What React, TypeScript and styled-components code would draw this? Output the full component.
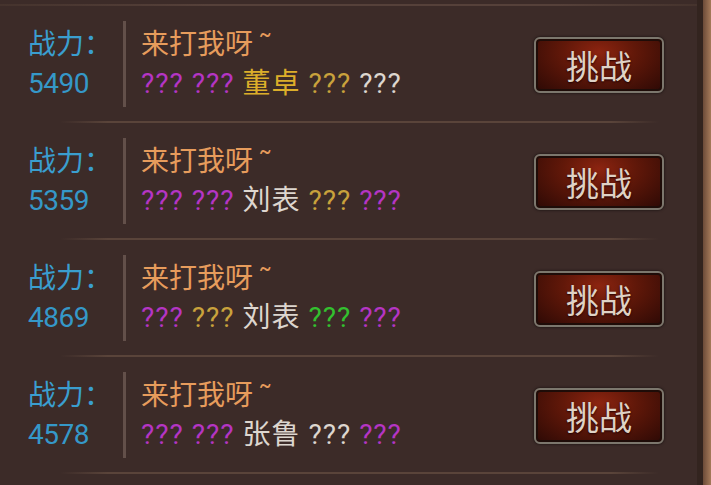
import React from "react";
import styled, { createGlobalStyle } from "styled-components";

type Seg = { text: string; color: string };
interface Opponent {
  power: number;
  names: Seg[];
}

const C = {
  purple: "#b535c4",
  olive: "#c9a23c",
  gold: "#dcae2a",
  white: "#ddd6cf",
  green: "#33c12f",
};

const data: Opponent[] = [
  {
    power: 5490,
    names: [
      { text: "???", color: C.purple },
      { text: "???", color: C.purple },
      { text: "董卓", color: C.gold },
      { text: "???", color: C.olive },
      { text: "???", color: C.white },
    ],
  },
  {
    power: 5359,
    names: [
      { text: "???", color: C.purple },
      { text: "???", color: C.purple },
      { text: "刘表", color: C.white },
      { text: "???", color: C.olive },
      { text: "???", color: C.purple },
    ],
  },
  {
    power: 4869,
    names: [
      { text: "???", color: C.purple },
      { text: "???", color: C.olive },
      { text: "刘表", color: C.white },
      { text: "???", color: C.green },
      { text: "???", color: C.purple },
    ],
  },
  {
    power: 4578,
    names: [
      { text: "???", color: C.purple },
      { text: "???", color: C.purple },
      { text: "张鲁", color: C.white },
      { text: "???", color: C.white },
      { text: "???", color: C.purple },
    ],
  },
];

const GlobalStyle = createGlobalStyle`
  html, body {
    margin: 0;
    padding: 0;
    background: #3b2a27;
    font-family: "Noto Sans CJK SC", "Noto Sans", sans-serif;
  }
`;

const Page = styled.div`
  width: 711px;
  height: 485px;
  display: flex;
  overflow: hidden;
  background: #3c2b28;
`;

const List = styled.div`
  flex: 1;
  padding-top: 4px;
  display: flex;
  flex-direction: column;
`;

const TopRule = styled.div`
  height: 2px;
  background: linear-gradient(90deg, #45332d 0%, #56413a 30%, #56413a 80%, #45332d 100%);
`;

const Row = styled.div`
  height: 115px;
  box-sizing: border-box;
  padding-bottom: 2px;
  display: flex;
  align-items: center;
`;

const Separator = styled.div`
  height: 2px;
  margin: 0 38px 0 60px;
  background: linear-gradient(90deg, rgba(90, 68, 58, 0) 0%, #5a443a 8%, #5a443a 92%, rgba(90, 68, 58, 0) 100%);
`;

const PowerCol = styled.div`
  width: 123px;
  padding-left: 28px;
  box-sizing: border-box;
  display: flex;
  flex-direction: column;
  gap: 8px;
`;

const PowerLabel = styled.div`
  color: #3a9ecf;
  font-size: 28px;
  line-height: 34px;
  white-space: nowrap;
`;

const PowerValue = styled.div`
  color: #3598c8;
  font-size: 28px;
  line-height: 34px;
  font-family: "Roboto", "Noto Sans", sans-serif;
  letter-spacing: -0.5px;
`;

const Divider = styled.div`
  width: 3px;
  height: 86px;
  margin-top: 2px;
  background: #63504a;
`;

const Info = styled.div`
  flex: 1;
  padding-left: 15px;
  display: flex;
  flex-direction: column;
  gap: 8px;
`;

const Title = styled.div`
  color: #e79c5c;
  font-size: 28px;
  line-height: 34px;
`;

const Tilde = styled.span`
  margin-left: 6px;
`;

const Names = styled.div`
  display: flex;
  gap: 8px;
  font-size: 28px;
  line-height: 34px;
  font-family: "Roboto", "Noto Sans CJK SC", sans-serif;
`;

const Name = styled.span<{ $color: string }>`
  color: ${(p) => p.$color};
  letter-spacing: 1px;
`;

const ChallengeBtn = styled.button`
  width: 130px;
  height: 56px;
  margin: 5px 33px 0 0;
  border-radius: 6px;
  border: 2px solid #7c776d;
  box-shadow: inset 0 0 0 2px #1e0c08, 0 0 3px rgba(0, 0, 0, 0.7);
  background: radial-gradient(ellipse at 50% 25%, #8c2410 0%, #621809 40%, #2c0905 100%);
  color: #dfd2c5;
  font-family: "Noto Sans CJK SC", sans-serif;
  font-size: 33px;
  padding: 0;
  text-shadow: 0 1px 2px #200;
`;

const RightEdge = styled.div`
  width: 14px;
  display: flex;
`;

const EdgeDark = styled.div`
  width: 6px;
  background: #33241f;
`;

const EdgeTan = styled.div`
  flex: 1;
  background: linear-gradient(90deg, #6b4a38, #a57a5a);
`;

export default function App() {
  return (
    <>
      <GlobalStyle />
      <Page>
        <List>
          <TopRule />
          {data.map((o, i) => (
            <React.Fragment key={i}>
              <Row>
                <PowerCol>
                  <PowerLabel>战力：</PowerLabel>
                  <PowerValue>{o.power}</PowerValue>
                </PowerCol>
                <Divider />
                <Info>
                  <Title>
                    来打我呀<Tilde>˜</Tilde>
                  </Title>
                  <Names>
                    {o.names.map((s, j) => (
                      <Name key={j} $color={s.color}>
                        {s.text}
                      </Name>
                    ))}
                  </Names>
                </Info>
                <ChallengeBtn>挑战</ChallengeBtn>
              </Row>
              <Separator />
            </React.Fragment>
          ))}
        </List>
        <RightEdge>
          <EdgeDark />
          <EdgeTan />
        </RightEdge>
      </Page>
    </>
  );
}
